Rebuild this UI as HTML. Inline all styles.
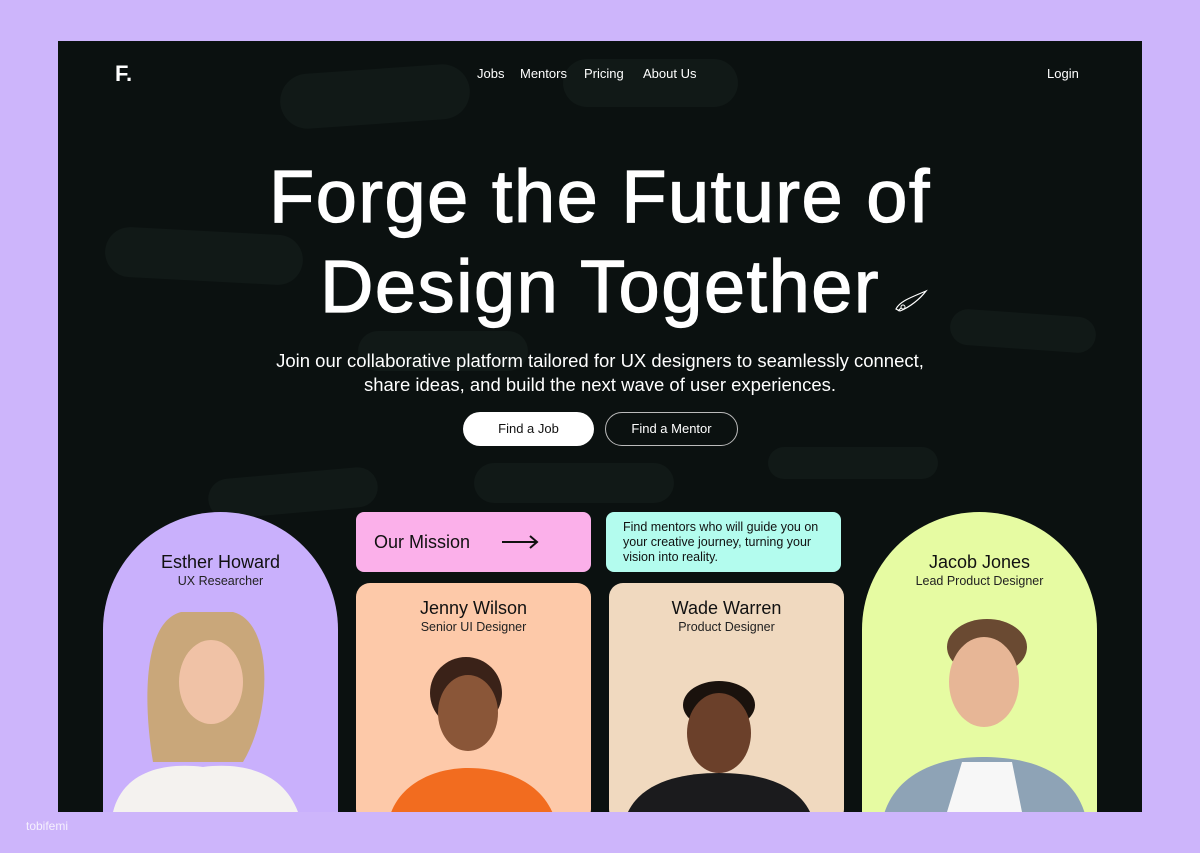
<!DOCTYPE html>
<html><head><meta charset="utf-8"><style>
*{margin:0;padding:0;box-sizing:border-box}
body{width:1200px;height:853px;background:#cdb5fb;font-family:"Liberation Sans",sans-serif;position:relative;overflow:hidden}
.panel{position:absolute;left:58px;top:41px;width:1084px;height:771px;background:#0b1110;overflow:hidden}
.blob{position:absolute;background:#111917;border-radius:40px}
.abs{position:absolute}
.nav a{position:absolute;top:25px;color:#fff;font-size:13px;text-decoration:none}
h1{position:absolute;left:0;width:1084px;text-align:center;color:#fff;font-weight:400;font-size:74px;letter-spacing:1.5px;line-height:90px;top:111px;-webkit-text-stroke:1.2px #fff}
.sub{position:absolute;left:0;width:1084px;top:308px;text-align:center;color:#fff;font-size:18.5px;line-height:24px}
.btn{position:absolute;top:371px;height:34px;border-radius:17px;font-size:13px;text-align:center;line-height:32px}
.card{position:absolute;overflow:hidden}
.nm{position:absolute;left:0;width:100%;text-align:center;color:#111;font-size:18px}
.rl{position:absolute;left:0;width:100%;text-align:center;color:#222;font-size:12.5px}
</style></head><body>
<div class="panel">
<div class="blob" style="left:222px;top:28px;width:190px;height:55px;transform:rotate(-4deg)"></div>
<div class="blob" style="left:505px;top:18px;width:175px;height:48px"></div>
<div class="blob" style="left:47px;top:190px;width:198px;height:50px;transform:rotate(3deg)"></div>
<div class="blob" style="left:892px;top:272px;width:146px;height:36px;transform:rotate(4deg)"></div>
<div class="blob" style="left:710px;top:406px;width:170px;height:32px"></div>
<div class="blob" style="left:416px;top:422px;width:200px;height:40px"></div>
<div class="blob" style="left:150px;top:432px;width:170px;height:40px;transform:rotate(-5deg)"></div>
<div class="blob" style="left:300px;top:290px;width:170px;height:40px"></div>
<div class="abs" style="left:57px;top:20px;color:#fff;font-size:22px;font-weight:700">F.</div>
<div class="nav"><a style="left:419px">Jobs</a><a style="left:462px">Mentors</a><a style="left:526px">Pricing</a><a style="left:585px">About Us</a><a style="left:989px">Login</a></div>
<h1>Forge the Future of<br>Design Together</h1>
<svg class="abs" style="left:834px;top:246px" width="40" height="28" viewBox="0 0 40 28"><path d="M4 22 C8 14 20 10 34 4 C28 12 18 20 8 24 Z M6 24 l3-3" stroke="#fff" stroke-width="1.2" fill="none"/><circle cx="11" cy="20" r="2" stroke="#fff" fill="none"/></svg>
<div class="sub">Join our collaborative platform tailored for UX designers to seamlessly connect,<br>share ideas, and build the next wave of user experiences.</div>
<div class="btn" style="left:405px;width:131px;background:#fff;color:#111;line-height:34px">Find a Job</div>
<div class="btn" style="left:547px;width:133px;border:1px solid #bbb;color:#fff">Find a Mentor</div>

<div class="card" style="left:45px;top:471px;width:235px;height:310px;background:#c9b0fc;border-radius:118px 118px 0 0">
<div class="nm" style="top:40px">Esther Howard</div><div class="rl" style="top:62px">UX Researcher</div>
<svg class="abs" style="left:0;top:80px" width="235" height="220"><path d="M78 20 C40 30 40 110 50 170 L140 170 C170 120 170 30 130 20 Z" fill="#c9a77a"/><ellipse cx="108" cy="90" rx="32" ry="42" fill="#f0c2a6"/><path d="M10 220 C20 180 60 170 100 175 C140 170 180 180 195 220 Z" fill="#f4f2ef"/></svg></div>

<div class="card" style="left:298px;top:471px;width:235px;height:60px;background:#fbb0ea;border-radius:8px">
<div class="abs" style="left:18px;top:20px;font-size:18px;color:#111">Our Mission</div>
<svg class="abs" style="left:145px;top:22px" width="40" height="16"><path d="M1 8h35M29 2l7 6-7 6" stroke="#111" stroke-width="2" fill="none"/></svg></div>
<div class="card" style="left:548px;top:471px;width:235px;height:60px;background:#b3fcee;border-radius:8px">
<div class="abs" style="left:17px;top:8px;font-size:12.5px;line-height:15px;color:#111;white-space:nowrap">Find mentors who will guide you on<br>your creative journey, turning your<br>vision into reality.</div></div>

<div class="card" style="left:298px;top:542px;width:235px;height:240px;background:#fdc9a9;border-radius:14px">
<div class="nm" style="top:15px">Jenny Wilson</div><div class="rl" style="top:37px">Senior UI Designer</div>
<svg class="abs" style="left:0;top:60px" width="235" height="180"><ellipse cx="110" cy="50" rx="36" ry="36" fill="#3a2218"/><ellipse cx="112" cy="70" rx="30" ry="38" fill="#8a5638"/><path d="M32 180 C40 140 80 125 112 125 C150 125 190 140 200 180 Z" fill="#f26c1f"/></svg></div>

<div class="card" style="left:551px;top:542px;width:235px;height:240px;background:#f0d9bf;border-radius:14px">
<div class="nm" style="top:15px">Wade Warren</div><div class="rl" style="top:37px">Product Designer</div>
<svg class="abs" style="left:0;top:60px" width="235" height="180"><ellipse cx="110" cy="62" rx="36" ry="24" fill="#1a120d"/><ellipse cx="110" cy="90" rx="32" ry="40" fill="#6b402a"/><path d="M15 180 C25 140 70 130 110 130 C150 130 195 140 205 180 Z" fill="#1b1b1d"/></svg></div>

<div class="card" style="left:804px;top:471px;width:235px;height:310px;background:#e6fba2;border-radius:118px 118px 0 0">
<div class="nm" style="top:40px">Jacob Jones</div><div class="rl" style="top:62px">Lead Product Designer</div>
<svg class="abs" style="left:0;top:80px" width="235" height="220"><ellipse cx="125" cy="55" rx="40" ry="28" fill="#6a4a32"/><ellipse cx="122" cy="90" rx="35" ry="45" fill="#e7b696"/><path d="M20 230 C30 180 80 165 120 165 C170 165 215 180 225 230 Z" fill="#8ea3b6"/><path d="M85 220 L100 170 L150 170 L160 220 Z" fill="#f7f7f7"/></svg></div>
</div>
<div class="abs" style="left:26px;top:819px;color:#fff;font-size:12px;opacity:.8">tobifemi</div>
</body></html>
